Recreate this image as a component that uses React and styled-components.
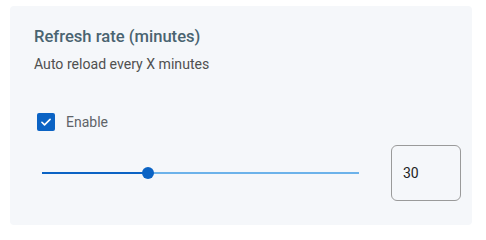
import React, { useState } from "react";
import styled, { createGlobalStyle } from "styled-components";

const GlobalStyle = createGlobalStyle`
  html, body {
    margin: 0;
    padding: 0;
    background: #ffffff;
    font-family: Roboto, "Noto Sans", sans-serif;
  }
`;

function CheckIcon() {
  return (
    <svg width="14" height="14" viewBox="0 0 24 24" fill="none">
      <path
        d="M5 12.5l4.5 4.5L19 7.5"
        stroke="#ffffff"
        strokeWidth="2.8"
        strokeLinecap="round"
        strokeLinejoin="round"
      />
    </svg>
  );
}

export default function App() {
  const [enabled, setEnabled] = useState(true);
  const [value, setValue] = useState(30);
  const min = 0;
  const max = 90;
  const pct = ((value - min) / (max - min)) * 100;

  return (
    <>
      <GlobalStyle />
      <Page>
        <Card>
          <Title>Refresh rate (minutes)</Title>
          <Subtitle>Auto reload every X minutes</Subtitle>

          <CheckRow onClick={() => setEnabled(!enabled)}>
            <Box checked={enabled}>{enabled && <CheckIcon />}</Box>
            <CheckLabel>Enable</CheckLabel>
          </CheckRow>

          <SliderRow>
            <SliderWrap>
              <Track />
              <ActiveTrack style={{ width: `${pct}%` }} />
              <Thumb style={{ left: `${pct}%` }} />
            </SliderWrap>
            <NumberBox>
              <NumberInput
                value={value}
                onChange={(e) => setValue(Number(e.target.value) || 0)}
              />
            </NumberBox>
          </SliderRow>
        </Card>
      </Page>
    </>
  );
}

const Page = styled.div`
  width: 486px;
  height: 233px;
  padding: 6px 14px 8px 10px;
  box-sizing: border-box;
`;

const Card = styled.div`
  height: 219px;
  background-color: #f5f7fa;
  border-radius: 4px;
  padding: 22px 11px 0 24px;
  box-sizing: border-box;
  display: flex;
  flex-direction: column;
`;

const Title = styled.div`
  font-size: 16.6px;
  font-weight: 500;
  color: #4a6471;
  line-height: 18px;
`;

const Subtitle = styled.div`
  margin-top: 9px;
  font-size: 14.1px;
  color: #505050;
  line-height: 18px;
`;

const CheckRow = styled.div`
  margin-top: 40px;
  margin-left: 3px;
  display: flex;
  align-items: center;
  gap: 11px;
  cursor: pointer;
`;

const Box = styled.div`
  width: 18px;
  height: 18px;
  border-radius: 2px;
  box-sizing: border-box;
  display: flex;
  align-items: center;
  justify-content: center;
  background-color: ${(p) => (p.checked ? "#0b63c4" : "transparent")};
  border: ${(p) => (p.checked ? "none" : "2px solid #757575")};
`;

const CheckLabel = styled.span`
  font-size: 14px;
  color: #5f6368;
`;

const SliderRow = styled.div`
  margin-top: 14px;
  display: flex;
  align-items: center;
`;

const SliderWrap = styled.div`
  position: relative;
  margin-left: 8px;
  width: 317px;
  height: 12px;
`;

const Track = styled.div`
  position: absolute;
  left: 0;
  right: 0;
  top: 5px;
  height: 2px;
  background-color: #6cb2ea;
`;

const ActiveTrack = styled.div`
  position: absolute;
  left: 0;
  top: 5px;
  height: 2px;
  background-color: #0b63c4;
`;

const Thumb = styled.div`
  position: absolute;
  top: 0;
  width: 12px;
  height: 12px;
  margin-left: -6px;
  border-radius: 50%;
  background-color: #0b63c4;
`;

const NumberBox = styled.div`
  margin-left: 32px;
  width: 70px;
  height: 56px;
  box-sizing: border-box;
  border: 1px solid #9a9a9a;
  border-radius: 6px;
  display: flex;
  align-items: center;
  padding-left: 11px;
`;

const NumberInput = styled.input`
  width: 100%;
  border: none;
  outline: none;
  background: transparent;
  font-family: Roboto, "Noto Sans", sans-serif;
  font-size: 14px;
  color: #222222;
  padding: 0;
`;
